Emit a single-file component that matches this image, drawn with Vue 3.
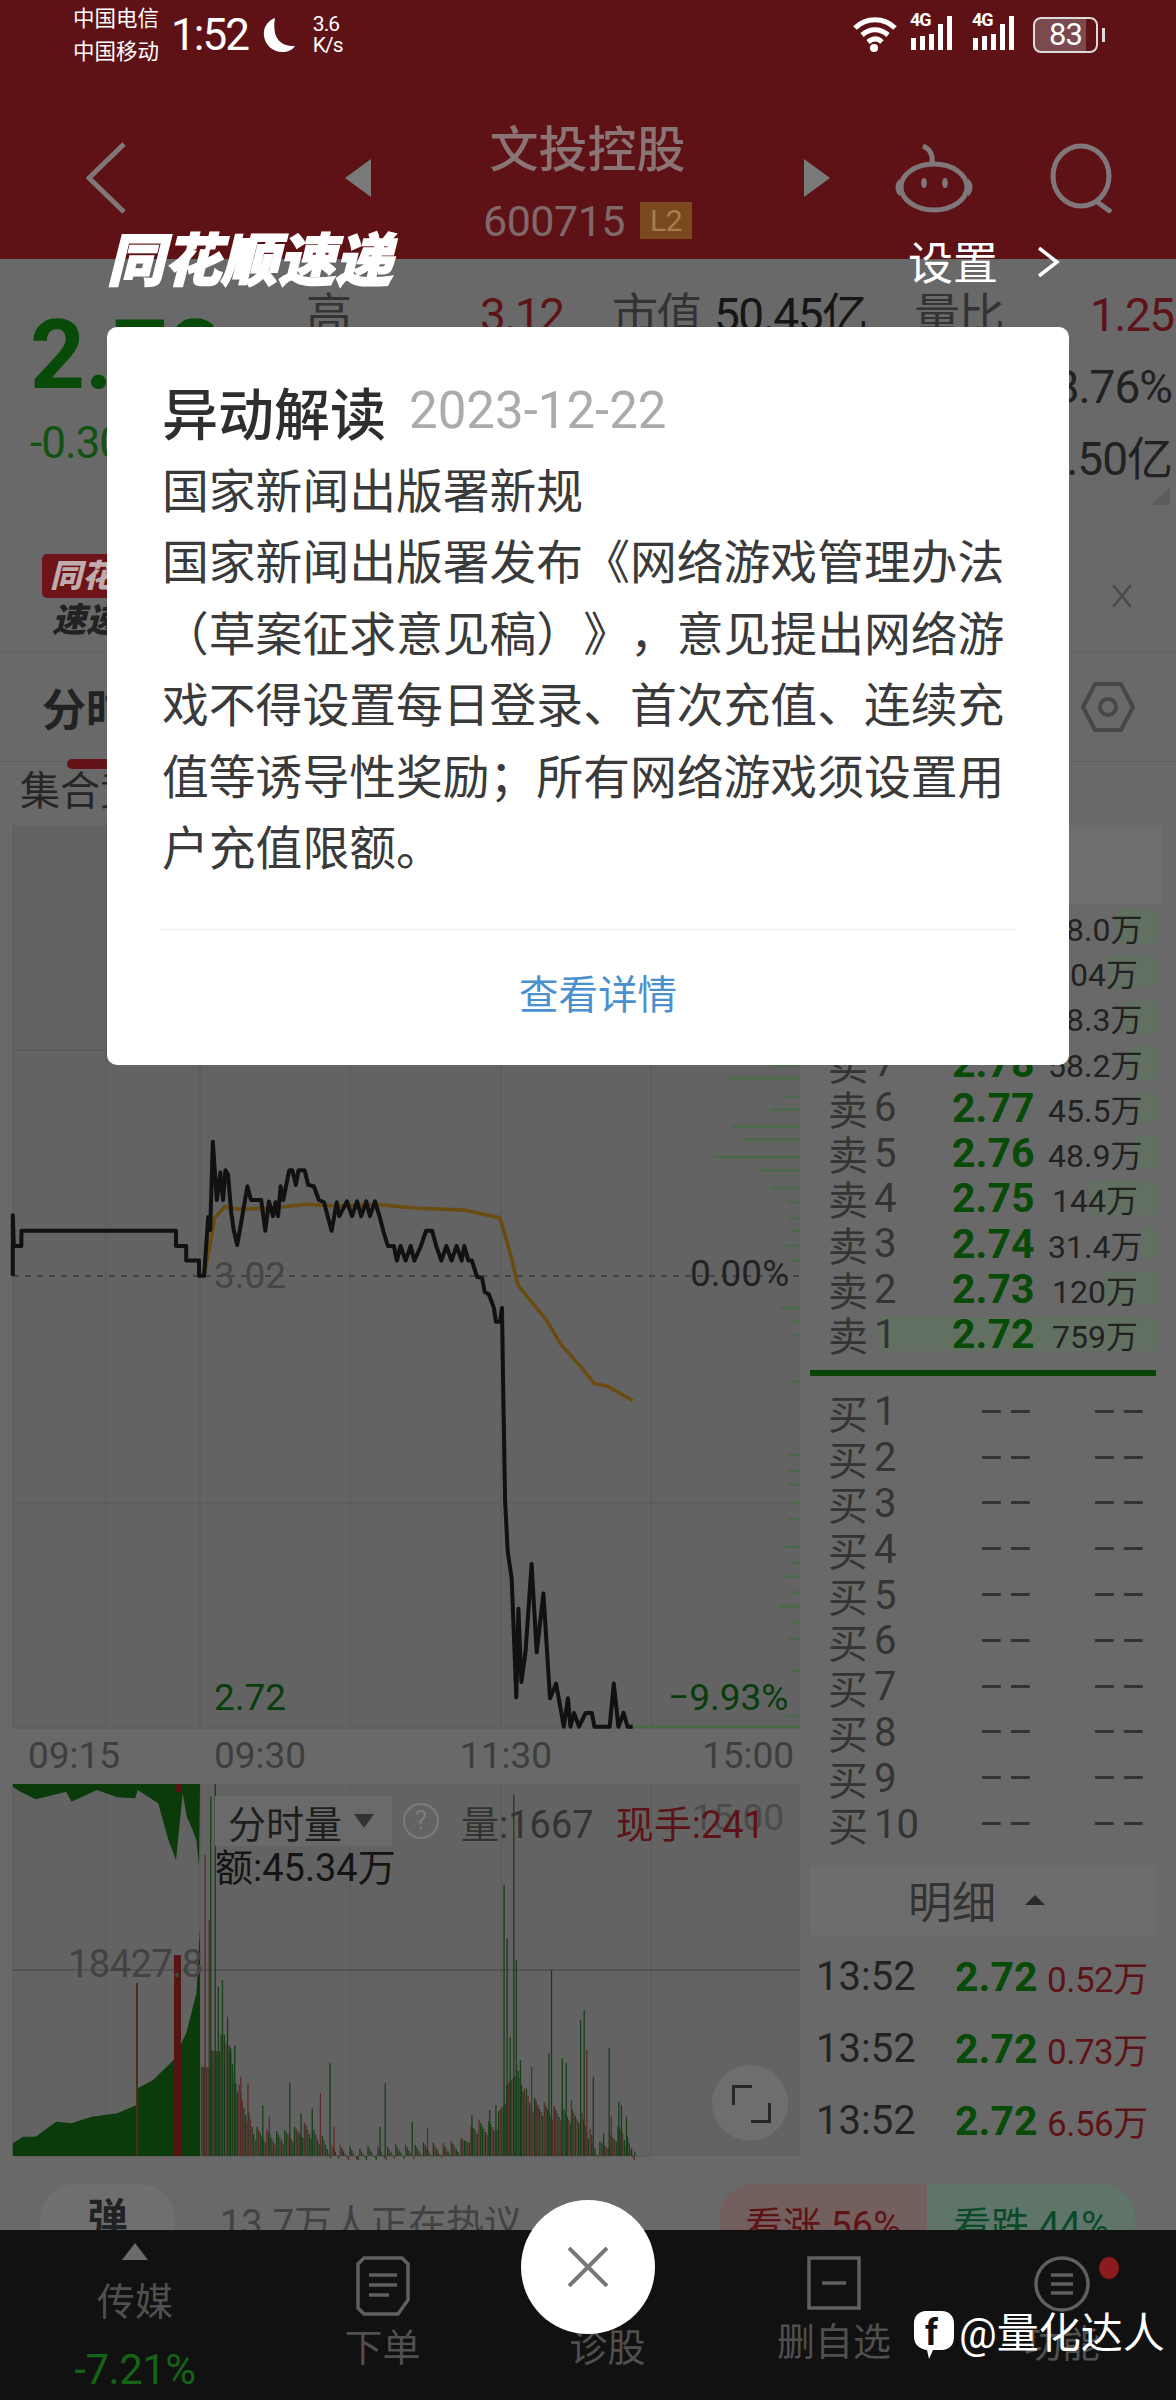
<script setup>
// zoom coordinates -> chart px
const px = (z) => z / 1.96
const priceY = (z) => 1060 + z / 2.178 - 825
const volY = (z) => z / 3 - 24

const line = (pts) => pts.map(([x, y]) => `${px(x).toFixed(1)},${priceY(y).toFixed(1)}`).join(' ')
const area = (pts) => pts.map(([x, y]) => `${px(x).toFixed(1)},${volY(y).toFixed(1)}`).join(' ')

const pricePts = line([
  [25,470],[25,338],[27,405],[42,405],[42,372],[345,372],[345,405],[365,405],[365,437],[390,437],[390,470],[400,470],
  [408,342],[412,370],[417,178],[425,305],[432,245],[437,305],[442,240],[447,250],[453,330],[458,370],[465,403],[475,340],
  [485,275],[492,305],[512,305],[520,372],[527,308],[535,340],[540,310],[545,340],[550,275],[555,305],[567,240],[573,240],
  [580,272],[585,240],[597,240],[604,272],[615,275],[625,305],[635,310],[650,372],[660,310],[665,340],[680,308],[690,340],
  [700,308],[708,340],[718,308],[725,340],[735,308],[745,345],[752,375],[760,405],[772,405],[778,437],[785,405],[795,437],
  [805,405],[812,437],[825,405],[835,372],[847,372],[855,405],[865,437],[875,405],[885,437],[895,405],[905,437],[910,405],
  [918,437],[925,437],[935,472],[945,475],[950,505],[958,510],[968,540],[972,570],[980,570],[984,540],[986,700],[990,960],
  [995,1070],[1003,1130],[1012,1388],[1016,1195],[1022,1355],[1030,1290],[1042,1098],[1052,1290],[1065,1162],[1078,1390],
  [1090,1358],[1105,1452],[1113,1390],[1118,1452],[1125,1422],[1135,1452],[1148,1422],[1160,1422],[1165,1452],[1195,1452],
  [1203,1358],[1212,1452],[1222,1422],[1230,1452],[1240,1452],
])
const avgPts = line([
  [400,470],[412,400],[420,345],[440,320],[470,325],[540,322],[600,314],[660,318],[740,315],[820,323],[910,327],[980,344],
  [1000,420],[1015,490],[1070,565],[1100,620],[1140,670],[1165,705],[1190,710],[1240,742],
])

const gridX = [13, 106, 200, 350, 501, 651]
const gridY = [225, 678, 903]

// order flow ticks on the right edge of the chart
const ticks = [
  [1515,12],[1425,40],[1540,80],[1510,108],[1435,145],[1458,173],[1400,211],[1485,240],[1510,278],[1545,310],[1545,345],
  [1550,372],[1540,405],[1550,437],[1530,540],[1555,570],[1555,600],[1565,635],[1550,700],[1565,770],[1545,860],[1545,895],
  [1545,925],[1555,965],[1545,1000],[1540,1060],[1550,1095],[1535,1125],[1550,1160],[1525,1190],[1550,1225],[1545,1260],
  [1550,1330],[1540,1428],
].map(([x, y]) => ({ x: px(x), y: priceY(y) }))

const auctionTop = area([
  [25,72],[392,72],[390,320],[385,240],[375,200],[366,170],[358,100],[345,300],[330,240],[310,130],[270,90],[265,115],
  [230,112],[190,90],[140,125],[130,95],[70,118],[40,95],[25,80],
])
const auctionBottom = area([
  [25,1188],[25,1150],[45,1130],[70,1130],[110,1085],[140,1090],[180,1070],[230,1060],[268,1035],[270,985],[300,960],
  [340,900],[365,820],[385,700],[392,500],[392,1188],
])

const base = [
  [395,920],[440,800],[470,980],[500,1100],[560,1110],[600,1080],[650,1150],[700,1160],[800,1150],[900,1140],[930,1080],
  [970,1080],[1010,900],[1040,1010],[1100,1040],[1140,1050],[1170,1150],[1190,1120],[1220,1090],[1245,1180],
]
const peaks = [
  [402,285,1],[410,480,1],[413,110,0],[422,72,0],[428,680,0],[436,660,0],[446,770,0],[452,865,0],[460,855,0],[472,950,1],
  [486,970,1],[515,1035,0],[528,1070,1],[568,970,0],[590,1060,0],[612,1045,0],[628,1000,1],[647,910,0],[655,1100,1],
  [755,970,0],[745,1100,0],[808,1085,0],[838,1105,1],[925,1065,0],[960,1050,0],[972,1035,0],[988,375,0],[994,535,0],
  [1000,830,0],[1007,105,0],[1012,600,0],[1020,900,0],[1028,985,1],[1042,920,1],[1050,1020,1],[1076,880,0],[1081,630,0],
  [1087,1040,1],[1102,895,0],[1110,910,0],[1120,1020,1],[1138,780,0],[1145,750,0],[1150,870,1],[1163,950,0],[1183,1120,0],
  [1194,865,0],[1198,1070,1],[1213,1025,0],[1218,1035,0],[1228,1070,0],[1238,1165,0],[1244,1175,0],
]
const baseTop = (x) => {
  for (let i = 1; i < base.length; i++) {
    if (x <= base[i][0]) {
      const [x0, y0] = base[i - 1]
      const [x1, y1] = base[i]
      return y0 + ((y1 - y0) * (x - x0)) / (x1 - x0)
    }
  }
  return 1180
}
const volBars = []
for (let x = 395, i = 0; x < 1246; x += 3.2, i++) {
  const wobble = ((i * 37) % 17) * 3
  volBars.push({ x: px(x), top: volY(baseTop(x) + wobble), red: (i * 7) % 5 < 2 })
}
peaks.forEach(([x, top, red]) => {
  volBars.push({ x: px(x), top: volY(top), red: !!red })
})

const asks = [
  { label: '卖', num: 10, price: '2.81', vol: '48.0万', bar: 11 },
  { label: '卖', num: 9, price: '2.80', vol: '104万', bar: 13 },
  { label: '卖', num: 8, price: '2.79', vol: '28.3万', bar: 9 },
  { label: '卖', num: 7, price: '2.78', vol: '58.2万', bar: 8 },
  { label: '卖', num: 6, price: '2.77', vol: '45.5万', bar: 5 },
  { label: '卖', num: 5, price: '2.76', vol: '48.9万', bar: 6 },
  { label: '卖', num: 4, price: '2.75', vol: '144万', bar: 18 },
  { label: '卖', num: 3, price: '2.74', vol: '31.4万', bar: 4 },
  { label: '卖', num: 2, price: '2.73', vol: '120万', bar: 15 },
  { label: '卖', num: 1, price: '2.72', vol: '759万', bar: 76 },
]
const bids = [1, 2, 3, 4, 5, 6, 7, 8, 9, 10]
const ticksDetail = [
  { time: '13:52', price: '2.72', vol: '0.52万' },
  { time: '13:52', price: '2.72', vol: '0.73万' },
  { time: '13:52', price: '2.72', vol: '6.56万' },
]
</script>

<template>
  <div class="page">
    <header class="top">
      <div class="status">
        <div class="carriers">
          <span>中国电信</span>
          <span>中国移动</span>
        </div>
        <span class="clock">1:52</span>
        <svg class="moon" width="34" height="36" viewBox="0 0 34 36">
          <path d="M13 1C5 4 1 11 2 19c1 9 9 16 18 16 6 0 10-2 13-6-11 1-18-5-20-13-1-5-1-10 0-15z" fill="#fff" />
        </svg>
        <div class="speed">
          <span>3.6</span>
          <span>K/s</span>
        </div>
        <div class="status-right">
          <svg width="44" height="36" viewBox="0 0 44 36" fill="none" stroke="#fff" stroke-width="5">
            <path d="M2 11C13 0 31 0 42 11" />
            <path d="M9 18c8-7 18-7 26 0" />
            <path d="M15 25c5-4 10-4 14 0" />
            <circle cx="21" cy="31" r="4" fill="#fff" stroke="none" />
          </svg>
          <div v-for="n in 2" :key="n" class="signal">
            <span class="signal-tag">4G</span>
            <svg width="50" height="34" viewBox="0 0 50 34" fill="#fff">
              <rect x="2" y="22" width="5" height="12" />
              <rect x="11" y="20" width="5" height="14" />
              <rect x="20" y="18" width="5" height="16" />
              <rect x="29" y="8" width="5" height="26" />
              <rect x="38" y="0" width="5" height="34" />
            </svg>
          </div>
          <div class="battery"><span>83</span></div>
          <i class="battery-tip"></i>
        </div>
      </div>

      <div class="topbar">
        <svg class="back" width="40" height="72" viewBox="0 0 40 72" fill="none" stroke="#80777a" stroke-width="5">
          <path d="M38 2 3 36l35 34" />
        </svg>
        <i class="tri tri-left"></i>
        <div class="stock">
          <div class="stock-name">文投控股</div>
          <div class="stock-code">600715<span class="l2">L2</span></div>
        </div>
        <i class="tri tri-right"></i>
        <svg class="robot" width="78" height="70" viewBox="0 0 78 70" fill="none" stroke="#80777a" stroke-width="5">
          <path d="M37 20c1-8-2-14-9-17" />
          <ellipse cx="39" cy="44" rx="33" ry="23" />
          <path d="M6 38c-4 3-4 10 0 13M72 38c4 3 4 10 0 13" />
          <ellipse cx="29" cy="40" rx="2.8" ry="5" fill="#80777a" stroke="none" />
          <ellipse cx="50" cy="40" rx="2.8" ry="5" fill="#80777a" stroke="none" />
        </svg>
        <svg class="search" width="66" height="70" viewBox="0 0 66 70" fill="none" stroke="#80777a" stroke-width="5">
          <ellipse cx="31" cy="33" rx="28" ry="30" />
          <path d="M46 58l15 11" />
        </svg>
      </div>
    </header>

    <section class="quote">
      <div class="price-block">
        <div class="last">2.72</div>
        <div class="change">-0.30</div>
      </div>
      <div class="stats">
        <div class="stat-row">
          <span class="muted">高</span>
          <span class="red">3.12</span>
          <span class="muted">市值</span>
          <span class="dark">50.45亿</span>
          <span class="muted">量比</span>
          <span class="red">1.25</span>
        </div>
        <div class="stat-line">8.76%</div>
        <div class="stat-line">2.50亿</div>
      </div>
      <i class="corner"></i>
    </section>

    <section class="ad">
      <div class="ad-logo">
        <span class="ad-flag">同花顺</span>
        <span class="ad-sub">速递</span>
      </div>
      <svg width="22" height="26" viewBox="0 0 22 26" stroke="#4b4b4b" stroke-width="2.5">
        <path d="M2 2l18 22M20 2 2 24" />
      </svg>
    </section>

    <section class="tabs">
      <div class="tab-active">分时<i></i></div>
      <svg width="54" height="54" viewBox="0 0 54 54" fill="none" stroke="#474747" stroke-width="4">
        <path d="M14 4h26l12 23-12 23H14L2 27z" />
        <circle cx="27" cy="27" r="8" />
      </svg>
    </section>

    <div class="auction">集合竞价</div>

    <main class="main">
      <div class="charts">
        <svg class="price-chart" width="810" height="959" viewBox="0 0 810 959">
          <rect x="13" y="0" width="787" height="903" fill="#636363" />
          <line v-for="x in gridX" :key="x" :x1="x" y1="0" :x2="x" y2="903" stroke="#5a5a5a" />
          <line v-for="y in gridY" :key="y" x1="13" :y1="y" x2="800" :y2="y" stroke="#5a5a5a" />
          <line x1="13" y1="451" x2="800" y2="451" stroke="#3a3a3a" stroke-width="1.5" stroke-dasharray="6 6" />
          <line x1="633" :y1="priceY(1452)" x2="800" :y2="priceY(1452)" stroke="#4a6a4a" stroke-width="2.5" />
          <line
            v-for="t in ticks"
            :key="t.y"
            :x1="t.x"
            :y1="t.y"
            x2="800"
            :y2="t.y"
            stroke="#4a6a4a"
            stroke-width="2.5"
          />
          <text x="214" y="463" class="axis" fill="#454545">3.02</text>
          <text x="690" y="461" class="axis" fill="#222">0.00%</text>
          <text x="214" y="885" class="axis" fill="#083d0c">2.72</text>
          <text x="668" y="885" class="axis" fill="#083d0c">−9.93%</text>
          <polyline :points="avgPts" fill="none" stroke="#6a4c12" stroke-width="3.6" />
          <polyline :points="pricePts" fill="none" stroke="#111" stroke-width="4" stroke-linejoin="round" />
          <text x="28" y="943" class="axis" fill="#3e3e3e">09:15</text>
          <text x="214" y="943" class="axis" fill="#3e3e3e">09:30</text>
          <text x="460" y="943" class="axis" fill="#3e3e3e">11:30</text>
          <text x="702" y="943" class="axis" fill="#3e3e3e">15:00</text>
        </svg>

        <div class="volume">
          <svg width="810" height="376" viewBox="0 0 810 376">
            <rect x="13" y="0" width="787" height="372" fill="#636363" />
            <line v-for="x in gridX" :key="x" :x1="x" y1="0" :x2="x" y2="372" stroke="#5a5a5a" />
            <line x1="13" y1="186" x2="800" y2="186" stroke="#4e4e4e" stroke-width="1.5" />
            <line x1="13" y1="372" x2="650" y2="372" stroke="#5a5a5a" />
            <polygon :points="auctionTop" fill="#0b3a0b" />
            <polygon :points="auctionBottom" fill="#0b3a0b" />
            <rect x="174" y="171" width="7" height="201" fill="#561414" />
            <rect x="176" y="0" width="5" height="8" fill="#561414" />
            <rect x="136" y="199" width="2" height="173" fill="#4a2c18" />
            <line
              v-for="(b, i) in volBars"
              :key="i"
              :x1="b.x"
              :y1="b.top"
              :x2="b.x"
              y2="372"
              :stroke="b.red ? '#5e2a2a' : '#173f17'"
              stroke-width="1.3"
            />
          </svg>
          <span class="vol-value">18427.8</span>
          <span class="vol-ghost">15:00</span>
          <div class="vol-legend">
            <div class="vol-legend-row">
              <span class="vol-tab">分时量<i></i></span>
              <span class="vol-help">?</span>
              <span class="vol-amount">量:1667</span>
              <span class="vol-hand">现手:241</span>
            </div>
            <div class="vol-money">额:45.34万</div>
          </div>
          <div class="expand"><i></i><i></i></div>
        </div>
      </div>

      <aside class="side">
        <div class="book-head"></div>
        <div v-for="a in asks" :key="a.num" class="book-row">
          <i class="book-bar" :style="{ width: a.bar + '%' }"></i>
          <span class="book-label">{{ a.label }}<b>{{ a.num }}</b></span>
          <span class="book-price">{{ a.price }}</span>
          <span class="book-vol">{{ a.vol }}</span>
        </div>
        <div class="book-split"></div>
        <div v-for="n in bids" :key="n" class="book-row bid">
          <span class="book-label">买<b>{{ n }}</b></span>
          <span class="book-empty">––</span>
          <span class="book-empty right">––</span>
        </div>
        <div class="detail-head">明细<i></i></div>
        <div v-for="(t, i) in ticksDetail" :key="i" class="detail-row">
          <span class="detail-time">{{ t.time }}</span>
          <span class="detail-price">{{ t.price }}</span>
          <span class="detail-vol">{{ t.vol }}</span>
        </div>
      </aside>
    </main>

    <div class="strip">
      <span class="strip-tag">弹</span>
      <span class="strip-text">13.7万人正在热议</span>
      <div class="vote">
        <span class="vote-up">看涨 56%</span>
        <span class="vote-down">看跌 44%</span>
      </div>
    </div>

    <nav class="nav">
      <div class="nav-item sector">
        <i class="sector-arrow"></i>
        <span class="nav-label">传媒</span>
        <span class="sector-rate">-7.21%</span>
      </div>
      <div class="nav-item">
        <svg width="54" height="60" viewBox="0 0 54 60" fill="none" stroke="#5f5f5f" stroke-width="3.5">
          <path d="M8 2h38l6 6v36L42 58H8l-6-6V8z" />
          <path d="M13 19h28M13 29h28M13 39h20" />
        </svg>
        <span class="nav-label">下单</span>
      </div>
      <div class="nav-item">
        <div class="nav-icon-gap"></div>
        <span class="nav-label">诊股</span>
      </div>
      <div class="nav-item">
        <svg width="54" height="54" viewBox="0 0 54 54" fill="none" stroke="#5f5f5f" stroke-width="3.5">
          <rect x="2" y="2" width="50" height="50" />
          <path d="M15 27h24" />
        </svg>
        <span class="nav-label">删自选</span>
      </div>
      <div class="nav-item">
        <svg width="56" height="56" viewBox="0 0 56 56" fill="none" stroke="#5f5f5f" stroke-width="3.5">
          <ellipse cx="28" cy="28" rx="26" ry="26" />
          <path d="M17 19h22M17 28h22M17 37h22" />
        </svg>
        <span class="nav-label">功能</span>
      </div>
      <i class="nav-dot"></i>
    </nav>

    <!-- overlays -->
    <div class="promo">
      <span class="promo-brand">同花顺速递</span>
      <span class="promo-set">设置</span>
      <svg width="24" height="30" viewBox="0 0 24 30" fill="none" stroke="#fff" stroke-width="3.5">
        <path d="M3 1l18 14L3 29" />
      </svg>
    </div>

    <div class="modal">
      <div class="modal-head">
        <span class="modal-title">异动解读</span>
        <span class="modal-date">2023-12-22</span>
      </div>
      <p class="modal-text">国家新闻出版署新规</p>
      <p class="modal-text">国家新闻出版署发布《网络游戏管理办法（草案征求意见稿）》，意见提出网络游戏不得设置每日登录、首次充值、连续充值等诱导性奖励；所有网络游戏须设置用户充值限额。</p>
      <div class="modal-foot">查看详情</div>
    </div>

    <button class="close">
      <svg width="42" height="40" viewBox="0 0 42 40" stroke="#777" stroke-width="4">
        <path d="M2 1l38 38M40 1 2 39" />
      </svg>
    </button>

    <div class="watermark">
      <svg width="40" height="48" viewBox="0 0 40 48">
        <path d="M12 0h16c7 0 12 5 12 12v14c0 8-5 13-12 13h-9l-4 9-2-9C5 38 0 33 0 26V12C0 5 5 0 12 0z" fill="#fff" />
        <text x="11" y="34" class="wm-f">f</text>
      </svg>
      <span>@量化达人</span>
    </div>
  </div>
</template>

<style scoped>
.page {
  position: relative;
  width: 1176px;
  height: 2400px;
  overflow: hidden;
  background: #696969;
  font-family: Roboto, "Noto Sans CJK SC", sans-serif;
  color: #333;
}

i {
  display: block;
  font-style: normal;
}

/* header */
.top {
  height: 259px;
  background: #5e1216;
}

.status {
  display: flex;
  align-items: center;
  height: 70px;
  padding: 0 71px 0 73px;
  color: #fff;
}

.carriers {
  display: flex;
  flex-direction: column;
  gap: 10px;
  font-size: 21.5px;
  line-height: 23px;
}

.clock {
  margin-left: 12px;
  font-size: 44px;
  letter-spacing: -2px;
}

.moon {
  margin-left: 14px;
}

.speed {
  display: flex;
  flex-direction: column;
  margin-left: 17px;
  font-size: 21px;
  line-height: 21px;
  letter-spacing: -1px;
}

.status-right {
  display: flex;
  align-items: center;
  margin-left: auto;
}

.signal {
  position: relative;
  margin-left: 12px;
}

.signal-tag {
  position: absolute;
  left: 1px;
  top: -7px;
  font-size: 18px;
  font-weight: 700;
  letter-spacing: -1px;
}

.battery {
  width: 65px;
  height: 36px;
  margin-left: 12px;
  border: 2.5px solid #ddd;
  border-radius: 8px;
  background: linear-gradient(90deg, #7a4a4c 83%, transparent 83%);
  text-align: center;
  font-size: 31px;
  line-height: 32px;
  box-sizing: border-box;
  letter-spacing: -1px;
}

.battery-tip {
  width: 3px;
  height: 14px;
  margin-left: 4px;
  background: #ddd;
}

.topbar {
  display: flex;
  align-items: center;
  height: 163px;
  padding: 26px 0 0 86px;
}

.tri {
  width: 0;
  height: 0;
  border-top: 19px solid transparent;
  border-bottom: 19px solid transparent;
}

.tri-left {
  margin-left: 219px;
  border-right: 26px solid #7a7a7a;
}

.tri-right {
  border-left: 26px solid #7a7a7a;
}

.stock {
  width: 433px;
  padding-top: 6px;
  text-align: center;
}

.stock-name {
  height: 60px;
  font-size: 49px;
  line-height: 60px;
  font-weight: 500;
  color: #8a7476;
}

.stock-code {
  display: flex;
  align-items: center;
  justify-content: center;
  gap: 15px;
  height: 40px;
  margin-top: 20px;
  font-size: 43px;
  letter-spacing: -0.5px;
  color: #80696b;
}

.l2 {
  width: 52px;
  height: 37px;
  background: #7a4a1e;
  color: #a87c4c;
  font-size: 30px;
  line-height: 37px;
}

.robot {
  margin-left: 65px;
}

.search {
  margin-left: 77px;
}

/* quote */
.quote {
  position: relative;
  display: flex;
  height: 281px;
}

.price-block {
  width: 306px;
  padding: 47px 0 0 30px;
  box-sizing: border-box;
}

.last {
  font-size: 96px;
  line-height: 98px;
  font-weight: 700;
  color: #084a08;
}

.change {
  margin-top: 14px;
  font-size: 44px;
  line-height: 50px;
  letter-spacing: -1px;
  color: #125212;
}

.stats {
  flex: 1;
  padding-top: 20px;
  font-size: 46px;
  line-height: 72px;
}

.stat-row {
  display: grid;
  grid-template-columns: 174px 132px 102px 200px 176px 84px;
  letter-spacing: -1.5px;
}

.stat-line {
  padding-right: 4px;
  text-align: right;
  color: #222;
  letter-spacing: -1px;
}

.muted {
  color: #333;
}

.dark {
  color: #161616;
}

.red {
  color: #5e1416;
}

.corner {
  position: absolute;
  right: 6px;
  bottom: 35px;
  width: 0;
  height: 0;
  border-left: 19px solid transparent;
  border-bottom: 18px solid #5c5c5c;
}

/* ad strip */
.ad {
  display: flex;
  align-items: center;
  justify-content: space-between;
  height: 112px;
  padding: 0 43px 0 42px;
  box-sizing: border-box;
  border-bottom: 1px solid #606060;
}

.ad-logo {
  display: flex;
  flex-direction: column;
  align-items: flex-start;
  gap: 4px;
  font-style: italic;
  font-weight: 900;
}

.ad-flag {
  padding: 4px 8px;
  border-radius: 5px;
  background: #6e1418;
  color: #c0acac;
  font-size: 32px;
  line-height: 36px;
}

.ad-sub {
  padding-left: 10px;
  font-size: 34px;
  line-height: 36px;
  color: #222;
}

.tabs {
  display: flex;
  align-items: center;
  justify-content: space-between;
  height: 110px;
  padding: 0 41px 0 42px;
  box-sizing: border-box;
  border-bottom: 1px solid #606060;
}

.tab-active {
  position: relative;
  font-size: 44px;
  font-weight: 700;
  color: #222;
}

.tab-active i {
  position: absolute;
  left: 25px;
  bottom: -30px;
  width: 50px;
  height: 10px;
  border-radius: 5px;
  background: #641418;
}

.auction {
  height: 63px;
  padding-left: 20px;
  font-size: 40px;
  line-height: 60px;
  color: #262626;
}

/* main */
.main {
  display: flex;
  height: 1345px;
}

.charts {
  width: 810px;
  flex: none;
}

.price-chart,
.volume svg {
  display: block;
}

.axis {
  font-size: 37px;
}

.volume {
  position: relative;
}

.vol-value {
  position: absolute;
  left: 68px;
  top: 158px;
  font-size: 38px;
  letter-spacing: -0.5px;
  color: #424242;
}

.vol-ghost {
  position: absolute;
  left: 692px;
  top: 12px;
  font-size: 37px;
  color: #4b4b4b;
}

.vol-legend {
  position: absolute;
  left: 215px;
  top: 12px;
  font-size: 38px;
}

.vol-legend-row {
  display: flex;
  align-items: center;
  height: 50px;
}

.vol-tab {
  display: flex;
  align-items: center;
  width: 177px;
  height: 50px;
  padding-left: 13px;
  box-sizing: border-box;
  background: #6a6a6a;
  color: #1e1e1e;
}

.vol-tab i {
  margin-left: 12px;
  border-top: 14px solid #333;
  border-left: 10px solid transparent;
  border-right: 10px solid transparent;
}

.vol-help {
  width: 36px;
  height: 36px;
  margin-left: 11px;
  border: 2.5px solid #7c7c7c;
  border-radius: 50%;
  box-sizing: border-box;
  text-align: center;
  font-size: 26px;
  line-height: 31px;
  color: #7c7c7c;
}

.vol-amount {
  margin-left: 22px;
  color: #333;
}

.vol-hand {
  margin-left: 22px;
  color: #5e1416;
}

.vol-money {
  margin-top: 0;
  font-size: 38px;
  line-height: 44px;
  color: #141414;
}

.expand {
  position: absolute;
  left: 712px;
  top: 281px;
  width: 76px;
  height: 76px;
  border-radius: 50%;
  background: #6e6e6e;
}

.expand i {
  position: absolute;
  width: 17px;
  height: 17px;
  border: solid #262626;
}

.expand i:first-child {
  left: 20px;
  top: 20px;
  border-width: 3px 0 0 3px;
}

.expand i:last-child {
  right: 17px;
  bottom: 18px;
  border-width: 0 3px 3px 0;
}

/* order book */
.side {
  flex: 1;
  min-width: 0;
}

.book-head {
  height: 79px;
  margin: 0 14px 0 0;
  background: #6e6e6e;
}

.book-row {
  position: relative;
  display: flex;
  align-items: center;
  height: 45.3px;
  padding-left: 18px;
  color: #333;
}

.book-row.bid {
  height: 45.8px;
}

.book-bar {
  position: absolute;
  right: 20px;
  top: 6px;
  height: 33px;
  background: #627062;
}

.book-label {
  position: relative;
  display: flex;
  align-items: center;
  width: 124px;
  flex: none;
  font-size: 40px;
  color: #343434;
}

.book-label b {
  margin-left: 6px;
  font-weight: 400;
}

.book-price {
  position: relative;
  width: 96px;
  flex: none;
  font-size: 41px;
  font-weight: 700;
  color: #084a08;
}

.book-vol {
  position: relative;
  width: 90px;
  text-align: right;
  white-space: nowrap;
  font-size: 32px;
  color: #222;
}

.book-empty {
  position: relative;
  width: 48px;
  margin-left: 27px;
  flex: none;
  font-size: 38px;
  letter-spacing: 4px;
  color: #333;
}

.book-empty.right {
  margin-left: 65px;
}

.book-split {
  height: 6px;
  margin: 13px 20px 13px 0;
  background: #084408;
}

.detail-head {
  display: flex;
  align-items: center;
  justify-content: center;
  gap: 29px;
  height: 69px;
  margin: 19px 21px 6px 0;
  padding-right: 12px;
  background: #6d6d6d;
  font-size: 44px;
  color: #333;
}

.detail-head i {
  border-bottom: 10px solid #2a2a2a;
  border-left: 10px solid transparent;
  border-right: 10px solid transparent;
}

.detail-row {
  display: flex;
  align-items: center;
  height: 72px;
  padding-left: 6px;
}

.detail-time {
  width: 139px;
  font-size: 40px;
  color: #222;
}

.detail-price {
  width: 92px;
  font-size: 41px;
  font-weight: 700;
  color: #084a08;
}

.detail-vol {
  font-size: 35px;
  letter-spacing: -0.5px;
  white-space: nowrap;
  color: #5e1416;
}

/* bottom */
.strip {
  position: relative;
  display: flex;
  height: 60px;
  padding-left: 40px;
}

.strip-tag {
  width: 135px;
  height: 90px;
  margin-top: 14px;
  border-radius: 34px;
  background: #6f6f6f;
  text-align: center;
  font-size: 40px;
  line-height: 70px;
  font-weight: 700;
  color: #222;
}

.strip-text {
  margin: 34px 0 0 45px;
  font-size: 38px;
  line-height: 40px;
  color: #424242;
}

.vote {
  display: flex;
  height: 90px;
  margin: 14px 41px 0 auto;
  font-size: 38px;
  line-height: 84px;
}

.vote-up,
.vote-down {
  width: 208px;
  text-align: center;
}

.vote-up {
  border-radius: 34px 0 0 0;
  background: #745f5f;
  color: #5e1416;
}

.vote-down {
  border-radius: 0 34px 0 0;
  background: #5f7569;
  color: #0a4a26;
}

.nav {
  position: relative;
  display: grid;
  grid-template-columns: 270px 225px 225px 228px 228px;
  height: 170px;
  background: #111;
}

.nav-item {
  display: flex;
  flex-direction: column;
  align-items: center;
  padding-top: 26px;
}

.nav-label {
  margin-top: 10px;
  font-size: 38px;
  line-height: 44px;
  color: #4f4f4f;
}

.nav-icon-gap {
  height: 60px;
}

.sector {
  padding-top: 13px;
}

.sector-arrow {
  border-bottom: 17px solid #6b6b6b;
  border-left: 13px solid transparent;
  border-right: 13px solid transparent;
}

.sector .nav-label {
  margin-top: 20px;
}

.sector-rate {
  margin-top: 25px;
  font-size: 42px;
  line-height: 42px;
  letter-spacing: -0.5px;
  color: #156315;
}

.nav-dot {
  position: absolute;
  left: 1099px;
  top: 27px;
  width: 20px;
  height: 22px;
  border-radius: 50%;
  background: #8c1a1e;
}

/* overlays */
.promo {
  position: absolute;
  left: 107px;
  top: 229px;
  width: 953px;
  display: flex;
  align-items: center;
  color: #fff;
}

.promo-brand {
  font-size: 57px;
  line-height: 66px;
  font-weight: 900;
  font-style: italic;
  -webkit-text-stroke: 1.5px #fff;
}

.promo-set {
  margin-left: auto;
  margin-right: 38px;
  margin-top: -4px;
  font-size: 45px;
}

.modal {
  position: absolute;
  left: 107px;
  top: 327px;
  width: 962px;
  height: 738px;
  padding: 52px 55px 0;
  box-sizing: border-box;
  border-radius: 10px;
  background: #fff;
}

.modal-head {
  display: flex;
  align-items: center;
  gap: 23px;
  height: 62px;
}

.modal-title {
  font-size: 56px;
  font-weight: 500;
  color: #2e2e2e;
}

.modal-date {
  font-size: 51px;
  color: #ababab;
}

.modal-text {
  width: 846px;
  margin: 0;
  font-size: 46.8px;
  line-height: 71.4px;
  text-spacing-trim: space-all;
  color: #3a3a3a;
}

.modal-head + .modal-text {
  margin-top: 16px;
}

.modal-foot {
  width: 856px;
  margin: 44px 0 0 -2px;
  padding: 39px 0 0 20px;
  box-sizing: border-box;
  border-top: 1px solid #eee;
  text-align: center;
  font-size: 39.5px;
  line-height: 54px;
  color: #4a90cf;
}

.close {
  position: absolute;
  left: 521px;
  top: 2200px;
  display: flex;
  align-items: center;
  justify-content: center;
  width: 134px;
  height: 134px;
  padding: 0;
  border: 0;
  border-radius: 50%;
  background: #fff;
}

.watermark {
  position: absolute;
  left: 914px;
  top: 2311px;
  display: flex;
  align-items: flex-start;
  gap: 5px;
  font-size: 42px;
  line-height: 46px;
  color: #fff;
}

.wm-f {
  font-size: 36px;
  font-weight: 700;
  fill: #111;
}
</style>
